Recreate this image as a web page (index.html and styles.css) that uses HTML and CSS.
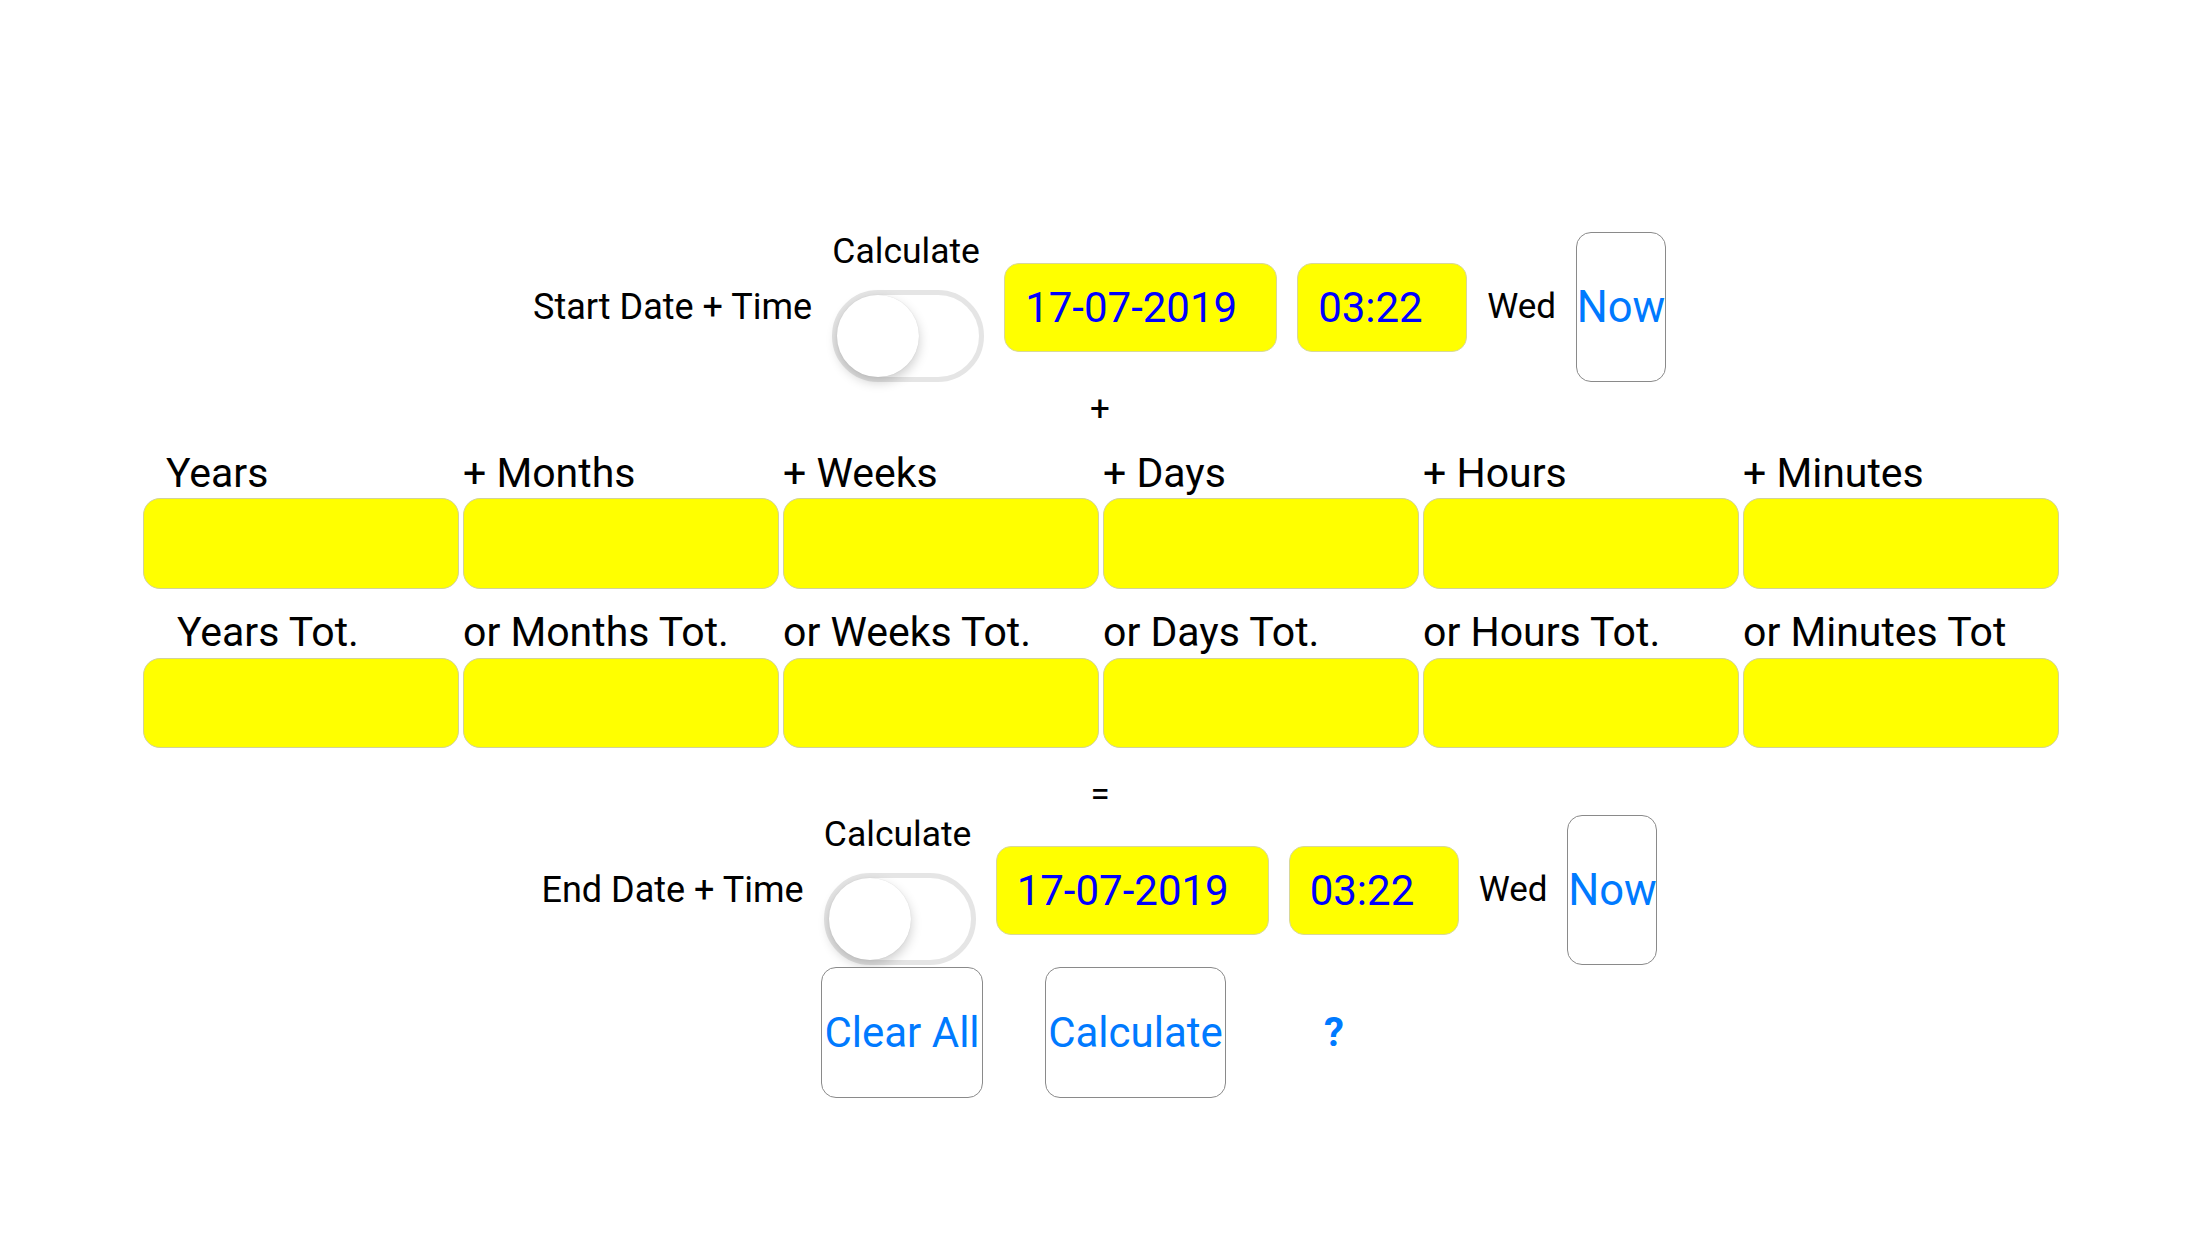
FILE: index.html
```html
<!DOCTYPE html>
<html lang="en">
<head>
<meta charset="utf-8">
<title>Date Calculator</title>
<link rel="stylesheet" href="styles.css">
</head>
<body>
<main class="page">
  <section class="dt-row">
    <div class="dt-label">Start Date + Time</div>
    <div class="switch-col">
      <div class="switch-label">Calculate</div>
      <div class="switch"><span class="knob"></span></div>
    </div>
    <div class="field date">17-07-2019</div>
    <div class="field time">03:22</div>
    <div class="weekday">Wed</div>
    <button class="btn now">Now</button>
  </section>

  <div class="op op-plus">+</div>

  <section class="grid labels labels-1">
    <div class="lbl lbl-years">Years</div>
    <div class="lbl">+ Months</div>
    <div class="lbl">+ Weeks</div>
    <div class="lbl">+ Days</div>
    <div class="lbl">+ Hours</div>
    <div class="lbl">+ Minutes</div>
  </section>
  <section class="grid boxes boxes-1">
    <div class="box"></div><div class="box"></div><div class="box"></div>
    <div class="box"></div><div class="box"></div><div class="box"></div>
  </section>

  <section class="grid labels labels-2">
    <div class="lbl lbl-years-tot">Years Tot.</div>
    <div class="lbl">or Months Tot.</div>
    <div class="lbl">or Weeks Tot.</div>
    <div class="lbl">or Days Tot.</div>
    <div class="lbl">or Hours Tot.</div>
    <div class="lbl">or Minutes Tot</div>
  </section>
  <section class="grid boxes boxes-2">
    <div class="box"></div><div class="box"></div><div class="box"></div>
    <div class="box"></div><div class="box"></div><div class="box"></div>
  </section>

  <div class="op op-eq">=</div>

  <section class="dt-row">
    <div class="dt-label">End Date + Time</div>
    <div class="switch-col">
      <div class="switch-label">Calculate</div>
      <div class="switch"><span class="knob"></span></div>
    </div>
    <div class="field date">17-07-2019</div>
    <div class="field time">03:22</div>
    <div class="weekday">Wed</div>
    <button class="btn now">Now</button>
  </section>

  <section class="actions">
    <button class="btn clear">Clear All</button>
    <button class="btn calc">Calculate</button>
    <button class="help">?</button>
  </section>
</main>
</body>
</html>
```

FILE: styles.css
```css
* { box-sizing: border-box; }

html, body {
  margin: 0;
  padding: 0;
  background: #ffffff;
}

body {
  width: 2208px;
  height: 1242px;
  overflow: hidden;
  font-family: Roboto, "Liberation Sans", Arial, sans-serif;
  color: #000;
}

.page {
  padding-top: 232px;
  display: flex;
  flex-direction: column;
}

/* date + time rows */
.dt-row {
  display: flex;
  justify-content: center;
  align-items: center;
  gap: 20px;
  height: 150px;
  padding-right: 9px;
}

.dt-label {
  font-size: 36px;
  line-height: 44px;
}

.switch-col {
  width: 152px;
  height: 150px;
  display: flex;
  flex-direction: column;
  align-items: center;
  justify-content: space-between;
}

.switch-label {
  font-size: 35.5px;
  line-height: 38px;
  margin-right: 4px;
}

.switch {
  width: 152px;
  height: 92px;
  border: 5px solid #e5e5e5;
  border-radius: 46px;
  background: #fff;
  display: flex;
  align-items: center;
}

.knob {
  width: 82px;
  height: 82px;
  border-radius: 50%;
  background: #fff;
  box-shadow: 0 5px 12px rgba(0, 0, 0, 0.2), 0 0 1px rgba(0, 0, 0, 0.14);
}

.field {
  height: 89px;
  background: #ffff00;
  border: 1px solid #d8d89a;
  border-radius: 15px;
  color: #0000ff;
  font-size: 42px;
  line-height: 87px;
  padding-left: 20px;
}

.field.date { width: 273px; }
.field.time { width: 170px; }

.weekday {
  font-size: 35px;
  line-height: 40px;
}

.btn {
  background: #fff;
  border: 1.5px solid #8a8a8a;
  border-radius: 15px;
  color: #007aff;
  font-family: Roboto, "Liberation Sans", Arial, sans-serif;
  font-size: 42px;
  padding: 0;
  display: flex;
  align-items: center;
  justify-content: center;
}

.btn.now {
  width: 90px;
  height: 150px;
  font-size: 43.5px;
}

/* operators */
.op {
  text-align: center;
  font-size: 35px;
  padding-right: 8px;
}

.op-plus {
  height: 52px;
  line-height: 54px;
}

.op-eq {
  height: 67px;
  padding-top: 27px;
  line-height: 40px;
}

/* grid of inputs */
.grid {
  display: grid;
  grid-template-columns: repeat(6, 316px);
  column-gap: 4px;
  padding-left: 143px;
}

.labels {
  font-size: 41px;
  line-height: 48px;
  white-space: nowrap;
}

.labels-1 {
  height: 64px;
  padding-top: 15px;
}

.labels-2 {
  height: 69px;
  padding-top: 19px;
}

.lbl-years { padding-left: 23px; }
.lbl-years-tot { padding-left: 34px; }

.boxes-1 .box { height: 91px; }
.boxes-2 .box { height: 90px; }

.box {
  background: #ffff00;
  border: 1px solid #d2d29a;
  border-radius: 17px;
}

/* bottom buttons */
.actions {
  display: flex;
  align-items: center;
  margin-top: 2px;
  padding-left: 821px;
}

.btn.clear {
  width: 162px;
  height: 131px;
}

.btn.calc {
  width: 181px;
  height: 131px;
  margin-left: 62px;
}

.help {
  width: 106px;
  margin-left: 55px;
  background: none;
  border: none;
  padding: 0;
  color: #007aff;
  font-family: Roboto, "Liberation Sans", Arial, sans-serif;
  font-size: 40px;
  font-weight: 700;
}
```
